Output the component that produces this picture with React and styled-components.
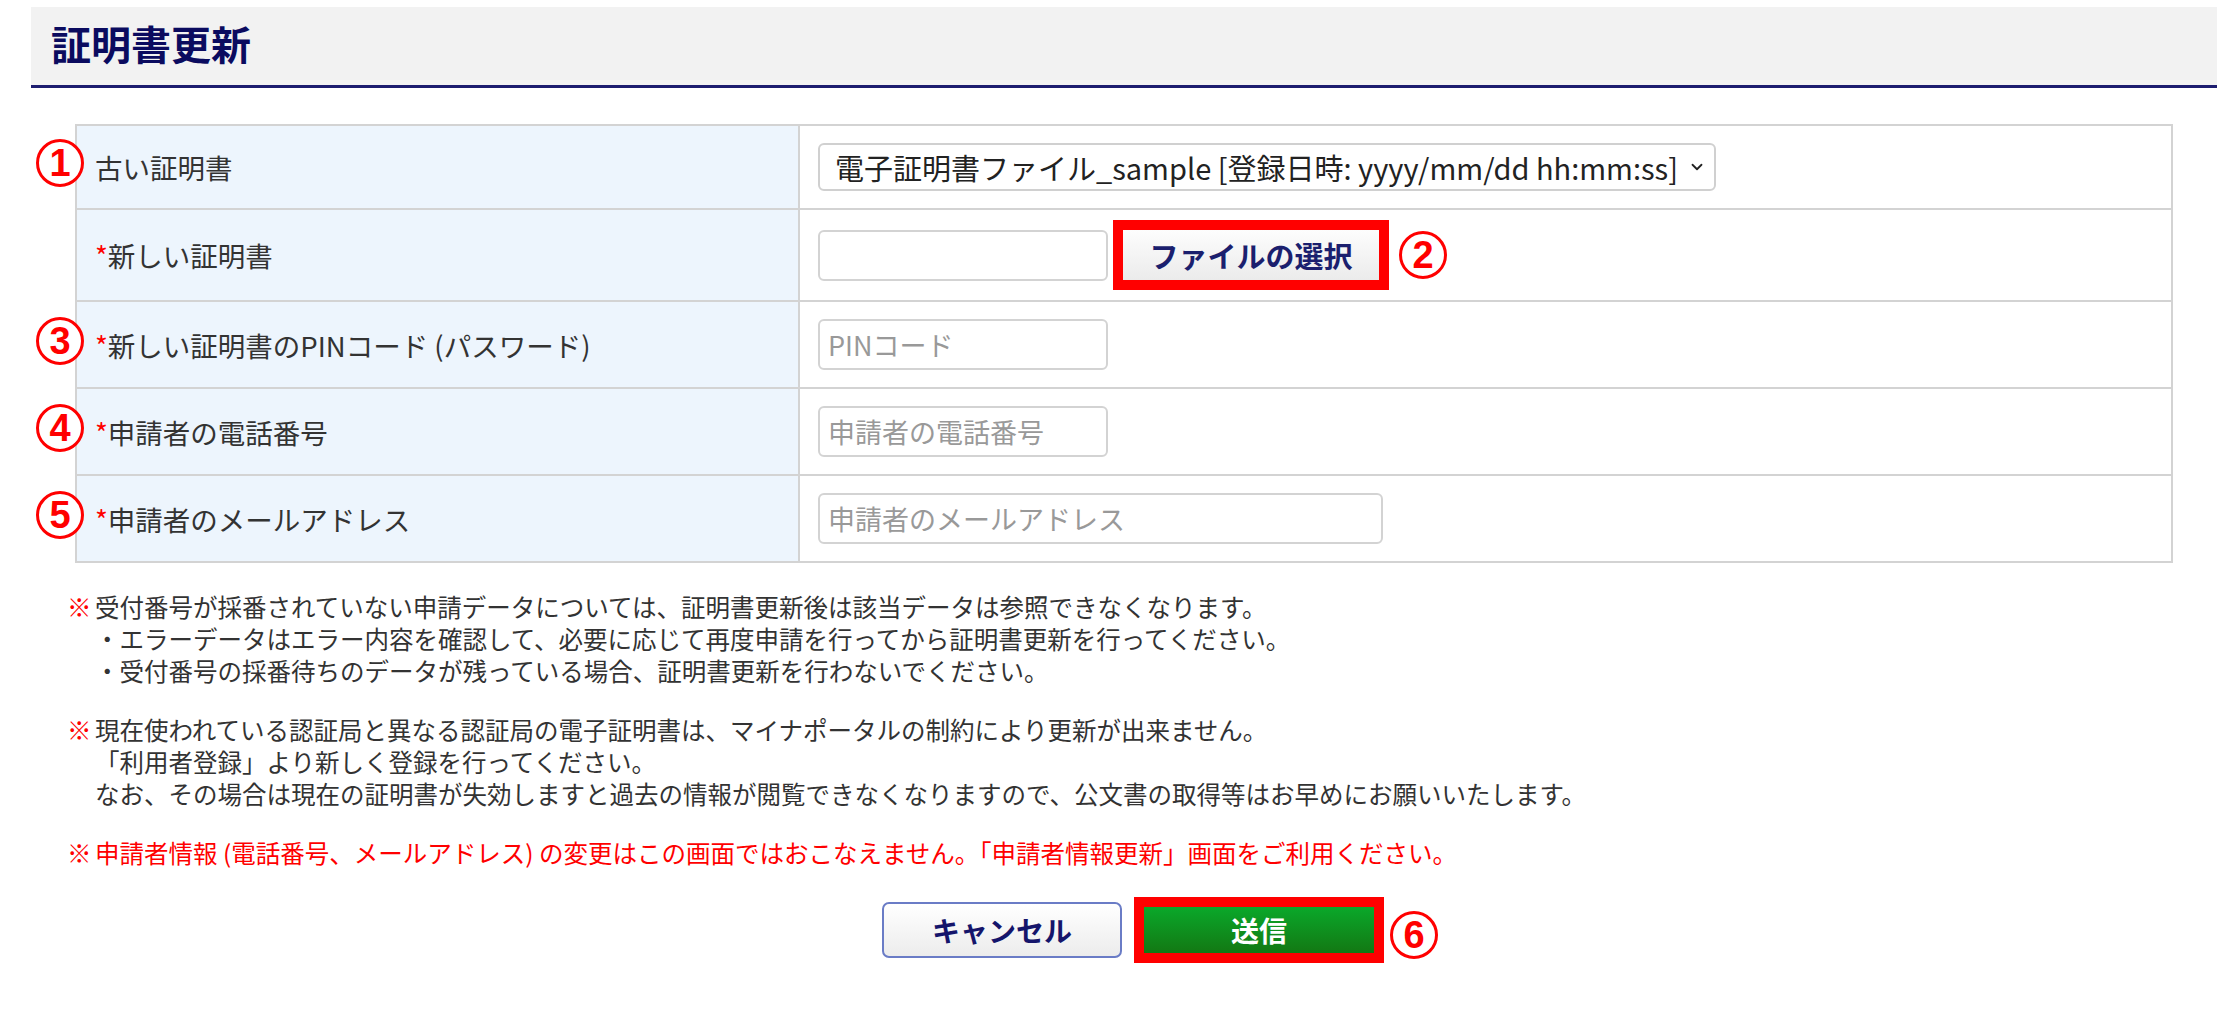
import React from 'react'
import styled, { createGlobalStyle } from 'styled-components'
import { ChevronDown } from 'lucide-react'

const GlobalStyle = createGlobalStyle`
  html, body {
    margin: 0;
    padding: 0;
    background: #fff;
  }
  body {
    font-family: "Noto Sans CJK JP", "Liberation Sans", sans-serif;
    color: #333;
  }
  * {
    box-sizing: border-box;
  }
`;

const App = () => {
    return (
        <>
            <GlobalStyle />
            <Page>
                <Header>
                    <Title>証明書更新</Title>
                </Header>

                <Table>
                    <Row>
                        <Label>
                            <Badge $side>1</Badge>
                            古い証明書
                        </Label>
                        <Value>
                            <Select>
                                <span>電子証明書ファイル_sample [登録日時: yyyy/mm/dd hh:mm:ss]</span>
                                <ChevronDown size={18} strokeWidth={2.4} color="#222" />
                            </Select>
                        </Value>
                    </Row>
                    <Row>
                        <Label>
                            <Req>*</Req>新しい証明書
                        </Label>
                        <Value $tight>
                            <Field readOnly $w={290} />
                            <Frame $ml={5}>
                                <FileButton>ファイルの選択</FileButton>
                            </Frame>
                            <Badge $ml={10}>2</Badge>
                        </Value>
                    </Row>
                    <Row>
                        <Label>
                            <Badge $side>3</Badge>
                            <Req>*</Req>新しい証明書のPINコード (パスワード)
                        </Label>
                        <Value>
                            <Field placeholder="PINコード" $w={290} />
                        </Value>
                    </Row>
                    <Row>
                        <Label>
                            <Badge $side>4</Badge>
                            <Req>*</Req>申請者の電話番号
                        </Label>
                        <Value>
                            <Field placeholder="申請者の電話番号" $w={290} />
                        </Value>
                    </Row>
                    <Row>
                        <Label>
                            <Badge $side>5</Badge>
                            <Req>*</Req>申請者のメールアドレス
                        </Label>
                        <Value>
                            <Field placeholder="申請者のメールアドレス" $w={565} />
                        </Value>
                    </Row>
                </Table>

                <Notes>
                    <Note>
                        <Mark>※</Mark>
                        <NoteBody>
                            <div>受付番号が採番されていない申請データについては、証明書更新後は該当データは参照できなくなります。</div>
                            <div>・エラーデータはエラー内容を確認して、必要に応じて再度申請を行ってから証明書更新を行ってください。</div>
                            <div>・受付番号の採番待ちのデータが残っている場合、証明書更新を行わないでください。</div>
                        </NoteBody>
                    </Note>
                    <Note>
                        <Mark>※</Mark>
                        <NoteBody>
                            <div>現在使われている認証局と異なる認証局の電子証明書は、マイナポータルの制約により更新が出来ません。</div>
                            <div>「利用者登録」より新しく登録を行ってください。</div>
                            <div>なお、その場合は現在の証明書が失効しますと過去の情報が閲覧できなくなりますので、公文書の取得等はお早めにお願いいたします。</div>
                        </NoteBody>
                    </Note>
                    <Note>
                        <Mark>※</Mark>
                        <NoteBody $red>
                            <div>申請者情報 (電話番号、メールアドレス) の変更はこの画面ではおこなえません。「申請者情報更新」画面をご利用ください。</div>
                        </NoteBody>
                    </Note>
                </Notes>

                <Actions>
                    <CancelButton>キャンセル</CancelButton>
                    <Frame $anchor>
                        <SubmitButton>送信</SubmitButton>
                        <Badge $float>6</Badge>
                    </Frame>
                </Actions>
            </Page>
        </>
    )
}

export default App;

const Page = styled.div`
    width: 2224px;
    padding: 7px 0 40px 31px;
`;

const Header = styled.header`
    width: 2186px;
    height: 81px;
    background: #f2f2f2;
    border-bottom: 3px solid #1d1d6f;
    display: flex;
    align-items: center;
    padding: 0 0 6px 20px;
`;

const Title = styled.h1`
    margin: 0;
    font-size: 40px;
    line-height: 1;
    font-weight: 700;
    color: #0b0b5f;
`;

const Table = styled.div`
    display: flex;
    flex-direction: column;
    width: 2098px;
    margin: 36px 0 0 44px;
    border: 2px solid #d3d3d3;
`;

const Row = styled.div`
    display: grid;
    grid-template-columns: 723px 1fr;
    border-bottom: 2px solid #d3d3d3;

    &:last-child {
        border-bottom: 0;
    }
`;

const Label = styled.div`
    position: relative;
    display: flex;
    align-items: center;
    padding: 0 18px;
    background: #edf5fd;
    border-right: 2px solid #d3d3d3;
    font-size: 27.5px;
    color: #333;
`;

const Req = styled.span`
    color: #f00;
`;

const Value = styled.div`
    display: flex;
    align-items: center;
    padding: ${p => (p.$tight ? '10px 18px' : '17px 18px')};
`;

const Select = styled.div`
    width: 898px;
    height: 48px;
    display: flex;
    align-items: center;
    justify-content: space-between;
    padding: 0 8px 0 15px;
    border: 2px solid #d0d0d0;
    border-radius: 6px;
    background: #fff;
    font-size: 29px;
    color: #222;
    white-space: nowrap;
`;

const Field = styled.input`
    width: ${p => p.$w}px;
    height: 51px;
    padding: 0 8px;
    border: 2px solid #d3d3d3;
    border-radius: 6px;
    font-family: inherit;
    font-size: 27px;
    color: #333;
    background: #fff;
    outline: none;

    &::placeholder {
        color: #999;
    }
`;

const Frame = styled.div`
    position: ${p => (p.$anchor ? 'relative' : 'static')};
    display: flex;
    margin-left: ${p => p.$ml || 0}px;
    border: 10px solid #f00;
`;

const FileButton = styled.button`
    width: 256px;
    height: 50px;
    border: 0;
    background: linear-gradient(#fdfdfd, #ebebeb);
    font-family: inherit;
    font-size: 29px;
    font-weight: 700;
    color: #1b1f6e;
    padding: 0;
`;

const Badge = styled.span`
    width: 48px;
    height: 48px;
    flex: none;
    display: flex;
    align-items: center;
    justify-content: center;
    border: 3px solid #f00;
    border-radius: 50%;
    background: #fff;
    color: #f00;
    font-family: "Liberation Sans", sans-serif;
    font-weight: 700;
    font-size: 38px;
    line-height: 1;
    margin-left: ${p => p.$ml || 0}px;

    ${p => p.$side && `
        position: absolute;
        left: -41px;
        top: 50%;
        transform: translateY(calc(-50% - 4px));
    `}

    ${p => p.$float && `
        position: absolute;
        left: calc(100% + 16px);
        top: 50%;
        transform: translateY(calc(-50% + 5px));
    `}
`;

const Notes = styled.div`
    margin: 28px 0 0 36px;
    font-size: 24.5px;
    line-height: 32px;
`;

const Note = styled.div`
    display: flex;
    margin-bottom: 27px;

    &:last-child {
        margin-bottom: 0;
    }
`;

const Mark = styled.span`
    width: 28px;
    flex: none;
    color: #f00;
    font-weight: 700;
`;

const NoteBody = styled.div`
    color: ${p => (p.$red ? '#f00' : '#333')};
    white-space: nowrap;
`;

const Actions = styled.div`
    width: 2186px;
    display: flex;
    justify-content: center;
    align-items: center;
    gap: 12px;
    margin-top: 28px;
    padding-left: 18px;
`;

const CancelButton = styled.button`
    width: 240px;
    height: 56px;
    border: 2px solid #6a7cc6;
    border-radius: 7px;
    background: linear-gradient(#ffffff, #ececec);
    font-family: inherit;
    font-size: 28px;
    font-weight: 700;
    color: #15156b;
    padding: 0;
`;

const SubmitButton = styled.button`
    width: 230px;
    height: 46px;
    border: 0;
    background: linear-gradient(#0aa82a, #137813);
    font-family: inherit;
    font-size: 28px;
    font-weight: 700;
    color: #fff;
    padding: 0;
`;
